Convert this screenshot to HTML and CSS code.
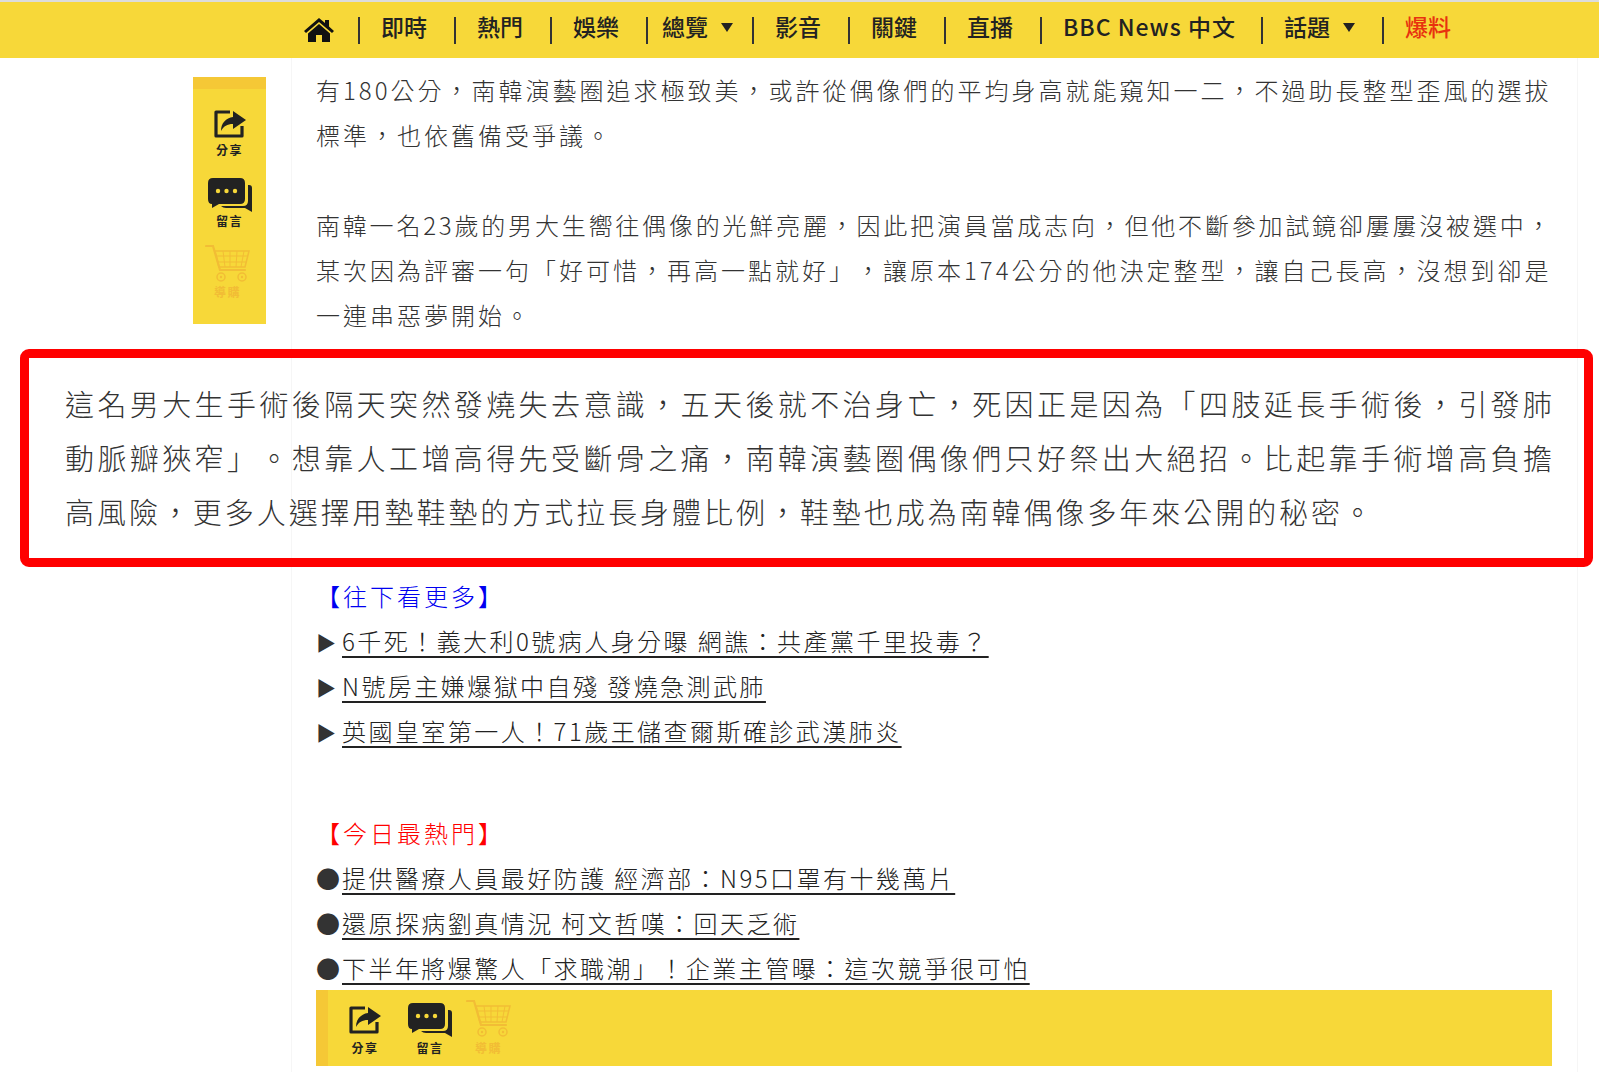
FILE: index.html
```html
<!DOCTYPE html>
<html lang="zh-Hant">
<head>
<meta charset="utf-8">
<title>爆料</title>
<link rel="stylesheet" href="styles.css">
</head>
<body>
<svg class="defs" width="0" height="0" aria-hidden="true">
  <symbol id="i-share" viewBox="0 0 32 28">
    <path d="M16 2H2v24h26V16" fill="none" stroke="#222" stroke-width="3.2" stroke-linejoin="round"/>
    <path d="M19 1l13 9-13 9v-5c-6 0-9 2-12 7 0-8 5-13 12-14z" fill="#222"/>
  </symbol>
  <symbol id="i-comment" viewBox="0 0 44 34">
    <path d="M40 7h1q3 0 3 3v24l-7-4H18q-3 0-5-2h22q5 0 5-5z" fill="#222"/>
    <path d="M5 0h27q5 0 5 5v16q0 5-5 5H11l-7 4 0-4q-4 0-4-5V5q0-5 5-5z" fill="#222"/>
    <circle cx="10" cy="13" r="2.200" fill="#f7d839"/>
    <circle cx="18.500" cy="13" r="2.200" fill="#f7d839"/>
    <circle cx="27" cy="13" r="2.200" fill="#f7d839"/>
  </symbol>
  <symbol id="i-cart" viewBox="0 0 45 38">
    <g fill="none" stroke="#f2bd35" stroke-width="1.500">
      <path d="M1 2h7l7 24h25" stroke-width="2.200" stroke-linecap="round"/>
      <path d="M10 7h34l-4 16H14z"/>
      <path d="M11 12h32M12.500 18h29M18 7l2 16M25 7v16M32 7l-1 16M39 7l-3 16" stroke-width="1"/>
      <circle cx="16" cy="33" r="4"/>
      <circle cx="37" cy="33" r="4"/>
    </g>
    <circle cx="16" cy="33" r="1.200" fill="#f2bd35"/>
    <circle cx="37" cy="33" r="1.200" fill="#f2bd35"/>
  </symbol>
</svg>

<nav class="topnav">
  <a class="home" href="#" aria-label="首頁">
    <svg class="home-icon" viewBox="0 0 30 24"><path d="M15 0L0 13l2 2L15 4l13 11 2-2-5-4.500V2h-4v3z" fill="#111"/><path d="M15 6L4 15.500V24h8v-7h6v7h8v-8.500z" fill="#111"/></svg>
  </a>
  <ul class="nav-list">
    <li class="nav-item">即時</li>
    <li class="nav-item">熱門</li>
    <li class="nav-item">娛樂</li>
    <li class="nav-item nav-tight">總覽<span class="caret"></span></li>
    <li class="nav-item">影音</li>
    <li class="nav-item">關鍵</li>
    <li class="nav-item">直播</li>
    <li class="nav-item nav-bbc">BBC News 中文</li>
    <li class="nav-item">話題<span class="caret"></span></li>
    <li class="nav-item nav-red">爆料</li>
  </ul>
</nav>

<div class="layout">
  <aside class="rail">
    <div class="tool tool-share"><svg class="ic-share"><use href="#i-share"/></svg><span>分享</span></div>
    <div class="tool"><svg class="ic-comment"><use href="#i-comment"/></svg><span>留言</span></div>
    <div class="tool tool-cart"><svg class="ic-cart"><use href="#i-cart"/></svg><span>導購</span></div>
  </aside>
  <main class="article">
    <p class="para">有180公分&#xFF0C;南韓演藝圈追求極致美&#xFF0C;或許從偶像們的平均身高就能窺知一二&#xFF0C;不過助長整型歪風的選拔<br>標準&#xFF0C;也依舊備受爭議。</p>
    <p class="para"><span class="line-tight">南韓一名23歲的男大生嚮往偶像的光鮮亮麗&#xFF0C;因此把演員當成志向&#xFF0C;但他不斷參加試鏡卻屢屢沒被選中&#xFF0C;</span><br>某次因為評審一句「好可惜&#xFF0C;再高一點就好」&#xFF0C;讓原本174公分的他決定整型&#xFF0C;讓自己長高&#xFF0C;沒想到卻是<br>一連串惡夢開始。</p>
    <div class="callout">這名男大生手術後隔天突然發燒失去意識&#xFF0C;五天後就不治身亡&#xFF0C;死因正是因為「四肢延長手術後&#xFF0C;引發肺<br>動脈瓣狹窄」。想靠人工增高得先受斷骨之痛&#xFF0C;南韓演藝圈偶像們只好祭出大絕招。比起靠手術增高負擔<br><span class="line-narrow">高風險&#xFF0C;更多人選擇用墊鞋墊的方式拉長身體比例&#xFF0C;鞋墊也成為南韓偶像多年來公開的秘密。</span></div>
    <section class="links">
      <h2 class="links-title title-blue">【往下看更多】</h2>
      <div class="link-row"><span class="mark mark-tri">▶</span><a href="#">6千死&#xFF01;義大利0號病人身分曝 網譙&#xFF1A;共產黨千里投毒&#xFF1F;</a></div>
      <div class="link-row"><span class="mark mark-tri">▶</span><a href="#">N號房主嫌爆獄中自殘 發燒急測武肺</a></div>
      <div class="link-row"><span class="mark mark-tri">▶</span><a href="#">英國皇室第一人&#xFF01;71歲王儲查爾斯確診武漢肺炎</a></div>
    </section>
    <section class="links links-hot">
      <h2 class="links-title title-red">【今日最熱門】</h2>
      <div class="link-row"><span class="mark">●</span><a href="#">提供醫療人員最好防護 經濟部&#xFF1A;N95口罩有十幾萬片</a></div>
      <div class="link-row"><span class="mark">●</span><a href="#">還原探病劉真情況 柯文哲嘆&#xFF1A;回天乏術</a></div>
      <div class="link-row"><span class="mark">●</span><a href="#">下半年將爆驚人「求職潮」&#xFF01;企業主管曝&#xFF1A;這次競爭很可怕</a></div>
    </section>
    <div class="toolbar">
      <div class="tool tool-share"><svg class="ic-share"><use href="#i-share"/></svg><span>分享</span></div>
      <div class="tool"><svg class="ic-comment"><use href="#i-comment"/></svg><span>留言</span></div>
      <div class="tool tool-cart"><svg class="ic-cart"><use href="#i-cart"/></svg><span>導購</span></div>
    </div>
  </main>
</div>
</body>
</html>
```

FILE: styles.css
```css
* { box-sizing: border-box; }
html, body { margin: 0; padding: 0; background: #fff; }
body {
  height: 1072px;
  overflow: hidden;
  font-family: "Noto Sans CJK TC", "Microsoft JhengHei", sans-serif;
  color: #333;
  text-spacing-trim: space-all;
}
.defs { position: absolute; }

.topnav {
  display: flex;
  align-items: center;
  height: 58px;
  padding-left: 304px;
  background: #f7d839;
  border-top: 2px solid #dcdcdc;
}
.home { display: flex; margin-right: 24px; }
.home-icon { width: 30px; height: 24px; }
.nav-list { display: flex; margin: 0; padding: 0; list-style: none; }
.nav-item {
  display: flex;
  align-items: flex-start;
  height: 27px;
  padding: 0 27px 0 21px;
  border-left: 2px solid #333;
  font-size: 23px;
  font-weight: 500;
  line-height: 19px;
  color: #222;
  white-space: nowrap;
}
.nav-tight { padding: 0 19px 0 14px; }
.nav-bbc { letter-spacing: 1px; padding-right: 25px; }
.nav-red { color: #e8320f; }
.caret {
  width: 0;
  height: 0;
  margin: 6px 0 0 13px;
  border-left: 6px solid transparent;
  border-right: 6px solid transparent;
  border-top: 9px solid #222;
}

.layout { display: flex; align-items: flex-start; padding-left: 193px; }
.rail {
  display: flex;
  flex-direction: column;
  align-items: center;
  gap: 16px;
  width: 73px;
  height: 247px;
  margin-top: 19px;
  padding-top: 21px;
  background: #f7d839;
  border-top: 12px solid #f5c836;
}
.rail .tool { gap: 2px; }
.rail .tool-share { margin-bottom: 5px; }
.rail .tool-cart { gap: 3px; margin-right: 4px; }

.tool {
  display: flex;
  flex-direction: column;
  align-items: center;
  justify-content: flex-end;
  gap: 4px;
}
.tool span {
  font-size: 12px;
  line-height: 14px;
  font-weight: 700;
  letter-spacing: 1.500px;
  color: #222;
}
.tool-cart span { color: #f2bd35; }
.ic-share { width: 32px; height: 28px; margin-bottom: 3px; }
.ic-comment { width: 44px; height: 34px; }
.ic-cart { width: 45px; height: 38px; }

.article {
  width: 1287px;
  height: 1014px;
  margin-left: 25px;
  padding: 9px 25px 0 24px;
  border-left: 1px solid #f6f6f6;
  border-right: 1px solid #f6f6f6;
  font-size: 24px;
  font-weight: 300;
  line-height: 45px;
  letter-spacing: 3px;
}
.para { margin: 0 0 45px; white-space: nowrap; }
.para + .para { margin-bottom: 0; }
.line-tight { letter-spacing: 2.800px; }

.callout {
  margin: 12px -41px 6px -296px;
  padding: 18px 0 20px 36px;
  border: 9px solid #f00;
  border-radius: 9px;
  font-size: 29px;
  line-height: 54px;
  letter-spacing: 3.400px;
  white-space: nowrap;
}
.line-narrow { letter-spacing: 2.950px; }

.links-title {
  margin: 0;
  font-size: 24px;
  line-height: 45px;
  font-weight: 300;
}
.title-blue { color: #0000f0; }
.title-red { color: #f00; }
.links-hot { margin-top: 57px; }
.link-row { height: 45px; line-height: 45px; white-space: nowrap; color: #222; }
.mark { display: inline-block; width: 26px; line-height: 1; letter-spacing: 0; color: #333; }
.mark-tri { font-size: 20px; }
.link-row a { color: #222; letter-spacing: 2.450px; text-decoration: underline; text-decoration-thickness: 2px; text-underline-offset: 5px; }

.toolbar {
  display: flex;
  align-items: flex-end;
  gap: 12px;
  height: 76px;
  padding: 0 0 11px 21px;
  background: #f7d839;
  border-left: 12px solid #f5c836;
  line-height: normal;
  letter-spacing: 0;
}
.toolbar .tool-share { margin-right: 15px; }
.toolbar .tool-cart { margin-left: 2px; }
```
